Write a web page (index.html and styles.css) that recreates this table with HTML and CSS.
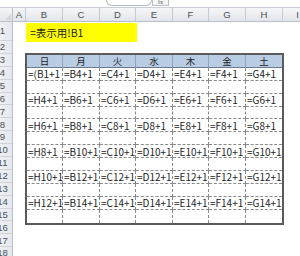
FILE: index.html
```html
<!DOCTYPE html>
<html lang="ja">
<head>
<meta charset="utf-8">
<link rel="stylesheet" href="styles.css">
</head>
<body>
<div class="app">
  <div class="fbar">
    <div class="namebox"></div>
    <div class="fx">fx</div>
  </div>
  <div class="sheet">
    <div class="corner"><span class="tri"></span></div>
    <div class="colheads">
      <div class="ch w-a">A</div>
      <div class="ch w-37">B</div>
      <div class="ch w-37">C</div>
      <div class="ch w-36">D</div>
      <div class="ch w-37">E</div>
      <div class="ch w-36">F</div>
      <div class="ch w-37">G</div>
      <div class="ch w-37">H</div>
      <div class="ch w-rest">I</div>
    </div>
    <div class="rowheads">
      <div class="rh tall"><span>1</span></div>
      <div class="rh"><span>2</span></div>
      <div class="rh"><span>3</span></div>
      <div class="rh"><span>4</span></div>
      <div class="rh"><span>5</span></div>
      <div class="rh"><span>6</span></div>
      <div class="rh"><span>7</span></div>
      <div class="rh"><span>8</span></div>
      <div class="rh"><span>9</span></div>
      <div class="rh"><span>10</span></div>
      <div class="rh"><span>11</span></div>
      <div class="rh"><span>12</span></div>
      <div class="rh"><span>13</span></div>
      <div class="rh"><span>14</span></div>
      <div class="rh"><span>15</span></div>
      <div class="rh"><span>16</span></div>
      <div class="rh"><span>17</span></div>
      <div class="rh"><span>18</span></div>
    </div>
    <div class="body">
      <div class="row1"><div class="yellow">=表示用!B1</div></div>
      <div class="row2"></div>
      <div class="tbl">
        <div class="c hd">日</div><div class="c hd">月</div><div class="c hd">火</div><div class="c hd">水</div><div class="c hd">木</div><div class="c hd">金</div><div class="c hd last">土</div>

        <div class="c">=(B1+1</div><div class="c">=B4+1</div><div class="c">=C4+1</div><div class="c">=D4+1</div><div class="c">=E4+1</div><div class="c">=F4+1</div><div class="c last">=G4+1</div>
        <div class="c"></div><div class="c"></div><div class="c"></div><div class="c"></div><div class="c"></div><div class="c"></div><div class="c last"></div>

        <div class="c">=H4+1</div><div class="c">=B6+1</div><div class="c">=C6+1</div><div class="c">=D6+1</div><div class="c">=E6+1</div><div class="c">=F6+1</div><div class="c last">=G6+1</div>
        <div class="c"></div><div class="c"></div><div class="c"></div><div class="c"></div><div class="c"></div><div class="c"></div><div class="c last"></div>

        <div class="c">=H6+1</div><div class="c">=B8+1</div><div class="c">=C8+1</div><div class="c">=D8+1</div><div class="c">=E8+1</div><div class="c">=F8+1</div><div class="c last">=G8+1</div>
        <div class="c"></div><div class="c"></div><div class="c"></div><div class="c"></div><div class="c"></div><div class="c"></div><div class="c last"></div>

        <div class="c">=H8+1</div><div class="c">=B10+1</div><div class="c">=C10+1</div><div class="c">=D10+1</div><div class="c">=E10+1</div><div class="c">=F10+1</div><div class="c last">=G10+1</div>
        <div class="c"></div><div class="c"></div><div class="c"></div><div class="c"></div><div class="c"></div><div class="c"></div><div class="c last"></div>

        <div class="c">=H10+1</div><div class="c">=B12+1</div><div class="c">=C12+1</div><div class="c">=D12+1</div><div class="c">=E12+1</div><div class="c">=F12+1</div><div class="c last">=G12+1</div>
        <div class="c"></div><div class="c"></div><div class="c"></div><div class="c"></div><div class="c"></div><div class="c"></div><div class="c last"></div>

        <div class="c">=H12+1</div><div class="c">=B14+1</div><div class="c">=C14+1</div><div class="c">=D14+1</div><div class="c">=E14+1</div><div class="c">=F14+1</div><div class="c last">=G14+1</div>
        <div class="c bot"></div><div class="c bot"></div><div class="c bot"></div><div class="c bot"></div><div class="c bot"></div><div class="c bot"></div><div class="c bot last"></div>
      </div>
    </div>
  </div>
</div>
</body>
</html>
```

FILE: styles.css
```css
* { box-sizing: border-box; }
html, body { margin: 0; padding: 0; background: #fff; }
body { width: 300px; height: 256px; overflow: hidden; font-family: "Noto Sans CJK JP", "Liberation Sans", sans-serif; }

.app { width: 300px; height: 256px; overflow: hidden; display: flex; flex-direction: column; }

.fbar { height: 8px; flex: none; position: relative; background: #fff; border-bottom: 1px solid #c9ced6; display: flex; }
.namebox { margin-left: 106px; width: 46px; height: 6px; border: 1px solid #b9bec6; border-top: none; border-radius: 0 0 6px 6px; }
.fx { width: 17px; height: 6px; border: 1px solid #b9bec6; border-top: none; background: #f4f5f7; font: 6px/4px "Liberation Serif", serif; color: #555; text-align: center; overflow: hidden; }

.sheet { flex: 1; display: grid; grid-template-columns: 13px 1fr; grid-template-rows: 14px 1fr; }

.corner { background: linear-gradient(#f4f5f7, #e3e6eb); border-right: 1px solid #b8bfc9; border-bottom: 1px solid #b8bfc9; position: relative; }
.tri { position: absolute; right: 1px; bottom: 1px; width: 0; height: 0; border-left: 6px solid transparent; border-bottom: 6px solid #d2d6dc; }

.colheads { display: flex; overflow: hidden; }
.ch { flex: none; height: 14px; background: linear-gradient(#f5f6f8, #e2e5ea); border-right: 1px solid #c3c9d1; border-bottom: 1px solid #b8bfc9; font: 9.5px/13px "Liberation Sans", sans-serif; color: #4a4f57; text-align: center; }
.w-a { width: 13px; }
.w-37 { width: 37px; }
.w-36 { width: 36px; }
.w-rest { width: 30px; }

.rowheads { display: flex; flex-direction: column; overflow: hidden; background: linear-gradient(90deg, #eef0f3, #e4e7ec); border-right: 1px solid #b8bfc9; }
.rh { flex: none; height: 12.9px; border-bottom: 1px solid #cfd4db; display: flex; align-items: center; font: 9.5px/1 "Liberation Sans", sans-serif; color: #4a4f57; }
.rh span { display: block; width: 20px; margin-left: -7px; text-align: center; }
.rh.tall { height: 19px; }

.body { display: flex; flex-direction: column; }
.row1 { height: 19px; flex: none; display: flex; padding-left: 13px; padding-top: 1px; }
.yellow { width: 111px; height: 19px; background: #ffff00; font-size: 10.5px; line-height: 19px; padding-left: 4px; color: #222; white-space: nowrap; }
.row2 { height: 12px; flex: none; }

.tbl { flex: none; margin-left: 12px; width: 259px; border: 2px solid #5b5b5b; display: grid; grid-template-columns: 36px 37px 36px 37px 36px 37px 36px; grid-auto-rows: 12.9px; }
.c { border-right: 1px dashed #8a8a8a; border-bottom: 1px dashed #8a8a8a; font-size: 10px; line-height: 11px; padding-left: 1px; color: #1e1e1e; white-space: nowrap; display: flex; align-items: center; }
.c.last { border-right: none; }
.c.bot { border-bottom: none; }
.hd { background: #b8cce4; justify-content: center; padding-left: 0; font-size: 9.5px; line-height: 10px; border-bottom: 1px solid #6d7a8c; border-right: 1px solid #8fa3bf; }
.hd.last { border-right: none; }
```
